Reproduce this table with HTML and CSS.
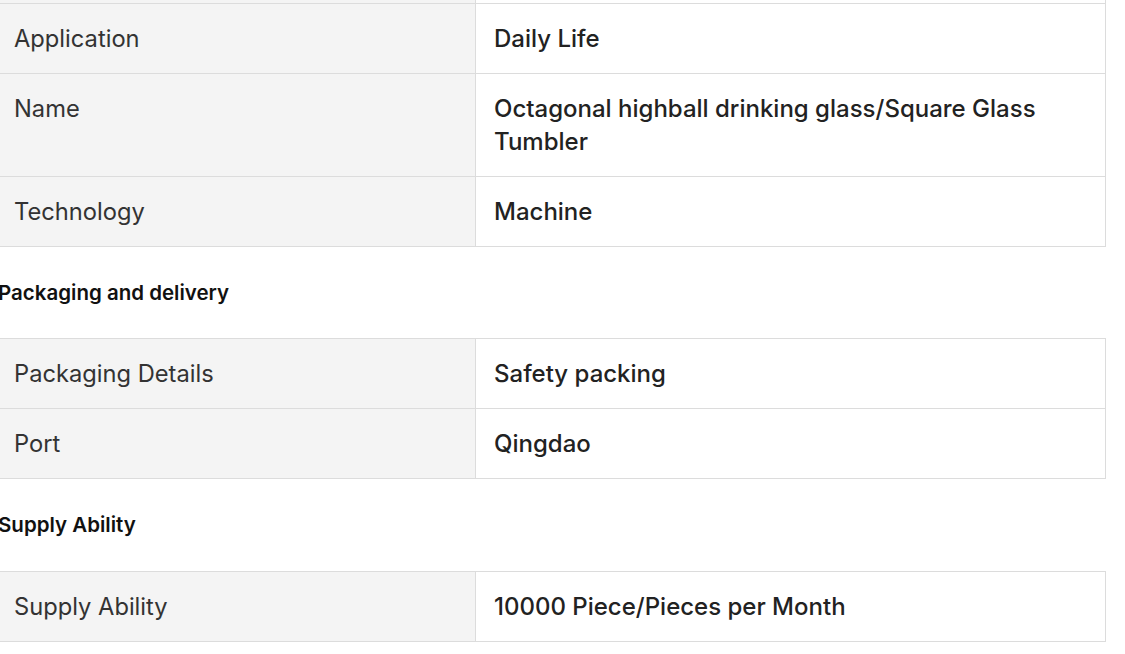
FILE: index.html
```html
<!DOCTYPE html>
<html>
<head>
<meta charset="utf-8">
<link rel="stylesheet" href="styles.css">
</head>
<body>
<div class="page">
  <table class="spec">
    <colgroup><col class="col-label"><col></colgroup>
    <tr><td class="label">Material</td><td class="value">Glass</td></tr>
    <tr><td class="label">Application</td><td class="value">Daily Life</td></tr>
    <tr><td class="label">Name</td><td class="value">Octagonal highball drinking glass/Square Glass Tumbler</td></tr>
    <tr><td class="label">Technology</td><td class="value">Machine</td></tr>
  </table>
  <h3 class="section-title">Packaging and delivery</h3>
  <table class="spec">
    <colgroup><col class="col-label"><col></colgroup>
    <tr><td class="label">Packaging Details</td><td class="value">Safety packing</td></tr>
    <tr><td class="label">Port</td><td class="value">Qingdao</td></tr>
  </table>
  <h3 class="section-title section-title-last">Supply Ability</h3>
  <table class="spec">
    <colgroup><col class="col-label"><col></colgroup>
    <tr><td class="label">Supply Ability</td><td class="value">10000 Piece/Pieces per Month</td></tr>
  </table>
</div>
</body>
</html>
```
FILE: styles.css
```css
html, body {
  margin: 0;
  padding: 0;
  background: #fff;
  overflow: hidden;
}
body {
  font-family: Inter, "Noto Sans", sans-serif;
  color: #222;
}
.page {
  margin-top: -67px;
  margin-left: -2px;
  width: 1108px;
}
.spec {
  width: 1108px;
  border-collapse: collapse;
  table-layout: fixed;
  border: 1px solid #dcdcdc;
}
.col-label {
  width: 477px;
}
.spec td {
  border: 1px solid #dcdcdc;
  padding: 18px 19px 18px 15px;
  font-size: 24px;
  line-height: 33px;
  vertical-align: top;
}
.spec td.label {
  background: #f4f4f4;
  color: #333;
  font-weight: 400;
  font-size: 23.7px;
}
.spec td.value {
  padding-left: 18px;
  background: #fff;
  color: #222;
  font-weight: 500;
}
.section-title {
  margin: 0;
  padding: 34px 0 33px;
  font-size: 20.5px;
  line-height: 24px;
  font-weight: 600;
  color: #111;
}
.section-title-last {
  padding-bottom: 34px;
}
```
